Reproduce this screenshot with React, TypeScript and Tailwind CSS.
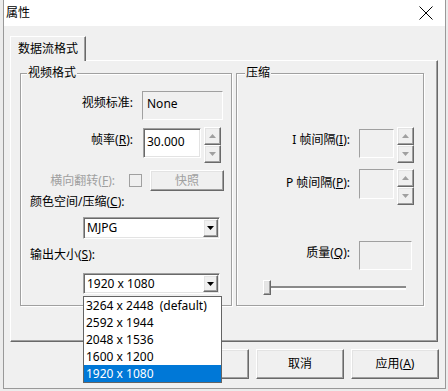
import React from 'react';

const sunken =
  'border border-t-[#a0a0a0] border-l-[#a0a0a0] border-r-white border-b-white shadow-[inset_1px_1px_0_#696969,inset_-1px_-1px_0_#e3e3e3]';
const raised =
  'border border-t-white border-l-white border-r-[#696969] border-b-[#696969] shadow-[inset_-1px_-1px_0_#a0a0a0,inset_1px_1px_0_#e3e3e3]';
const flat = 'border border-t-[#a0a0a0] border-l-[#a0a0a0] border-r-white border-b-white';
const etched = 'border border-[#a0a0a0] shadow-[inset_1px_1px_0_#fff,1px_1px_0_#fff]';

function Arrow({ up, color }: { up?: boolean; color: string }) {
  return (
    <svg width="7" height="4" viewBox="0 0 7 4">
      <polygon points={up ? '0,4 7,4 3.5,0' : '0,0 7,0 3.5,4'} fill={color} />
    </svg>
  );
}

function Spin() {
  return (
    <div className="flex flex-col w-[17px]">
      <div className={`${raised} h-[18px] flex items-center justify-center bg-[#f0f0f0]`}>
        <Arrow up color="#a0a0a0" />
      </div>
      <div className={`${raised} h-[18px] flex items-center justify-center bg-[#f0f0f0]`}>
        <Arrow color="#a0a0a0" />
      </div>
    </div>
  );
}

function Combo({ value, h }: { value: string; h: string }) {
  return (
    <div className={`${sunken} ${h} w-[137px] bg-white flex items-stretch`}>
      <div className="flex-1 pl-[3px] flex items-center">{value}</div>
      <div className={`${raised} w-[15px] my-[1px] mr-[1px] flex items-center justify-center bg-[#f0f0f0]`}>
        <Arrow color="#000" />
      </div>
    </div>
  );
}

const sizes = ['3264 x 2448  (default)', '2592 x 1944', '2048 x 1536', '1600 x 1200', '1920 x 1080'];

export default function App() {
  return (
    <div
      className="w-[448px] h-[391px] bg-[#ececec] text-[12px] leading-[16px] text-black overflow-hidden"
      style={{ fontFamily: '"Noto Sans", "Noto Sans CJK SC", sans-serif' }}
    >
      <div className="ml-[3px] w-[443px] border-l border-r border-b border-[#999] bg-[#f0f0f0]">
        {/* Title bar */}
        <div className="h-[26px] bg-white flex items-center justify-between pl-[2px]">
          <span className="text-[12px]">属性</span>
          <svg width="14" height="14" viewBox="0 0 14 14" className="mr-[12px]">
            <line x1="0.5" y1="0.5" x2="13.5" y2="13.5" stroke="#000" strokeWidth="1" />
            <line x1="13.5" y1="0.5" x2="0.5" y2="13.5" stroke="#000" strokeWidth="1" />
          </svg>
        </div>

        <div className="h-[362px] pt-[10px] pl-[6px]">
          {/* Tab */}
          <div className="relative z-10 -mb-px w-[76px] h-[25px] bg-[#f0f0f0] border-t border-l border-r border-t-white border-l-white border-r-[#696969] shadow-[inset_-1px_0_0_#a0a0a0] flex items-center justify-center">
            数据流格式
          </div>

          {/* Panel */}
          <div className="w-[428px] h-[282px] border border-t-white border-l-white border-r-[#696969] border-b-[#696969] shadow-[inset_-1px_-1px_0_#a0a0a0] pt-[12px] pl-[9px] flex gap-[4px]">
            {/* 视频格式 */}
            <div className={`relative ${etched} w-[212px] h-[233px]`}>
              <span className="absolute -top-[9px] left-[6px] px-[1px] bg-[#f0f0f0]">视频格式</span>

              <div className="flex items-start mt-[17px]">
                <div className="w-[112px] text-right pt-[4px]">视频标准:</div>
                <div className={`${flat} ml-[9px] w-[81px] h-[29px] pl-[4px] pt-[4px]`}>None</div>
              </div>

              <div className="flex items-start mt-[7px]">
                <div className="w-[112px] text-right pt-[5px]">
                  帧率(<span className="underline">R</span>):
                </div>
                <div className={`${sunken} ml-[10px] mt-[1px] w-[58px] h-[30px] bg-white pl-[3px] pt-[5px]`}>30.000</div>
                <div className="ml-[3px]">
                  <Spin />
                </div>
              </div>

              <div className="flex items-center mt-[7px] text-[#a0a0a0]">
                <div className="w-[94px] text-right">
                  横向翻转(<span className="underline">F</span>):
                </div>
                <div className="ml-[14px] w-[13px] h-[13px] border border-[#a0a0a0] bg-[#f0f0f0]" />
                <div className={`${raised} ml-[8px] w-[74px] h-[21px] flex items-center justify-center`}>快照</div>
              </div>

              <div className="mt-[3px] pl-[9px]">
                颜色空间/压缩(<span className="underline">C</span>):
              </div>
              <div className="mt-[7px] ml-[62px]">
                <Combo value="MJPG" h="h-[22px]" />
              </div>

              <div className="mt-[8px] pl-[9px]">
                输出大小(<span className="underline">S</span>):
              </div>
              <div className="relative z-20 mt-[10px] ml-[62px]">
                <Combo value="1920 x 1080" h="h-[21px]" />
                <div className="absolute top-[23px] left-0 w-[139px] bg-white border border-[#646464]">
                  {sizes.map((s, i) => (
                    <div
                      key={s}
                      className={`h-[17px] pl-[2px] flex items-center whitespace-pre ${
                        i === sizes.length - 1 ? 'bg-[#0078d7] text-white' : ''
                      }`}
                    >
                      {s}
                    </div>
                  ))}
                </div>
              </div>
            </div>

            {/* 压缩 */}
            <div className={`relative ${etched} w-[188px] h-[233px]`}>
              <span className="absolute -top-[9px] left-[8px] px-[1px] bg-[#f0f0f0]">压缩</span>

              <div className="flex items-start mt-[53px]">
                <div className="w-[113px] text-right pt-[5px]">
                  I 帧间隔(<span className="underline">I</span>):
                </div>
                <div className={`${flat} ml-[9px] mt-[2px] w-[35px] h-[29px]`} />
                <div className="ml-[3px]">
                  <Spin />
                </div>
              </div>

              <div className="flex items-start mt-[6px]">
                <div className="w-[113px] text-right pt-[6px]">
                  P 帧间隔(<span className="underline">P</span>):
                </div>
                <div className={`${flat} ml-[9px] w-[35px] h-[30px]`} />
                <div className="ml-[3px]">
                  <Spin />
                </div>
              </div>

              <div className="flex items-start mt-[36px]">
                <div className="w-[113px] text-right pt-[4px]">
                  质量(<span className="underline">Q</span>):
                </div>
                <div className={`${flat} ml-[9px] w-[53px] h-[29px]`} />
              </div>

              <div className="flex items-center mt-[10px] ml-[26px]">
                <div className={`${raised} relative z-10 w-[8px] h-[15px] bg-[#e6e6e6]`} />
                <div className="w-[135px] h-[4px] border-t-2 border-b-2 border-t-[#8a8a8a] border-b-white" />
              </div>
            </div>
          </div>

          {/* Buttons */}
          <div className="flex justify-end gap-[7px] mt-[7px] pr-[6px]">
            <div className={`${raised} w-[88px] h-[30px] flex items-center justify-center`}>确定</div>
            <div className={`${raised} w-[88px] h-[30px] flex items-center justify-center`}>取消</div>
            <div className={`${raised} w-[88px] h-[30px] flex items-center justify-center`}>
              应用(<span className="underline">A</span>)
            </div>
          </div>
        </div>
      </div>
    </div>
  );
}
